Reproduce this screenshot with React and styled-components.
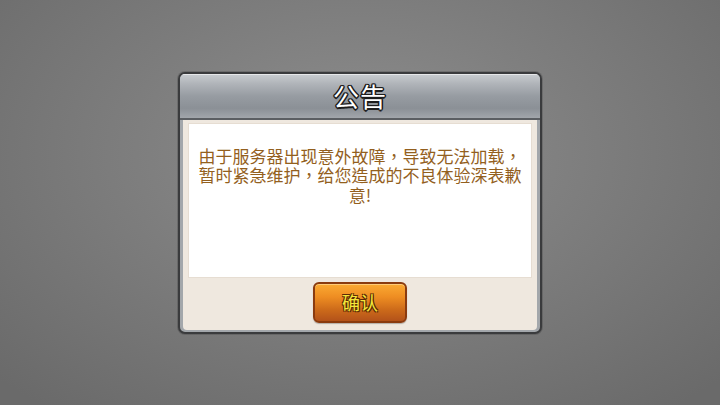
import React from 'react';
import styled, { createGlobalStyle } from 'styled-components';

const GlobalStyle = createGlobalStyle`
  html, body, #root {
    margin: 0;
    padding: 0;
    width: 100%;
    height: 100%;
  }
  body {
    font-family: "Noto Sans CJK SC", "Noto Sans", sans-serif;
    overflow: hidden;
  }
`;

const Screen = styled.div`
  width: 720px;
  height: 405px;
  display: flex;
  align-items: center;
  justify-content: center;
  background: radial-gradient(ellipse 70% 80% at 50% 38%, #8e8e8e 0%, #7c7c7c 50%, #6a6a6a 100%);
`;

const Dialog = styled.div`
  width: 364px;
  height: 262px;
  box-sizing: border-box;
  border: 2px solid #3a3b3d;
  border-radius: 7px;
  background: #a3a7ab;
  display: flex;
  flex-direction: column;
  overflow: hidden;
  box-shadow: 0 0 0 1px rgba(0, 0, 0, 0.15);
`;

const Header = styled.div`
  height: 44px;
  flex-shrink: 0;
  display: flex;
  align-items: center;
  justify-content: center;
  border-bottom: 2px solid #5b5e62;
  background: linear-gradient(
    to bottom,
    #c9cdd1 0%,
    #b0b4b9 22%,
    #979ca2 50%,
    #8b9096 78%,
    #a2a6ab 100%
  );
  box-shadow: inset 0 1px 0 rgba(255, 255, 255, 0.55);
`;

const Title = styled.h1`
  margin: 0;
  font-size: 26px;
  font-weight: 400;
  line-height: 1;
  color: #ffffff;
  letter-spacing: 1px;
  text-shadow:
    -1px -1px 0 #1c1c1c, 1px -1px 0 #1c1c1c,
    -1px 1px 0 #1c1c1c, 1px 1px 0 #1c1c1c,
    0 1.5px 0 #1c1c1c, 0 -1.5px 0 #1c1c1c,
    1.5px 0 0 #1c1c1c, -1.5px 0 0 #1c1c1c;
`;

const Body = styled.div`
  flex: 1;
  margin: 0 3px 2px;
  background: #efe8df;
  border-radius: 0 0 4px 4px;
  padding: 3px 5px 0;
  display: flex;
  flex-direction: column;
`;

const MessageBox = styled.div`
  height: 155px;
  background: #ffffff;
  border: 1px solid #e6ddd2;
  display: flex;
  justify-content: center;
  padding-top: 22px;
  box-sizing: border-box;
`;

// TC face gives the centred full-width comma seen in the screenshot
const Message = styled.p`
  margin: 0;
  width: 334px;
  font-family: "Noto Sans CJK TC", "Noto Sans CJK SC", sans-serif;
  font-size: 17px;
  line-height: 19.5px;
  color: #935f1e;
  text-align: center;
`;

const Footer = styled.div`
  flex: 1;
  display: flex;
  align-items: center;
  justify-content: center;
  padding-bottom: 3px;
`;

const ConfirmButton = styled.button`
  width: 94px;
  height: 41px;
  box-sizing: border-box;
  border: 2px solid #8a3b0f;
  border-radius: 6px;
  background: linear-gradient(to bottom, #fbaa33 0%, #ee8d22 35%, #cc6a1a 70%, #b3521a 100%);
  box-shadow: inset 0 1px 0 rgba(255, 220, 150, 0.7), 0 1px 1px rgba(0, 0, 0, 0.25);
  font-family: "Noto Sans CJK SC", sans-serif;
  font-size: 18px;
  color: #f4e63a;
  cursor: pointer;
  padding: 0;
  text-shadow:
    -1px -1px 0 #5a2a05, 1px -1px 0 #5a2a05,
    -1px 1px 0 #5a2a05, 1px 1px 0 #5a2a05;
`;

export default function App() {
  return (
    <>
      <GlobalStyle />
      <Screen>
        <Dialog>
          <Header>
            <Title>公告</Title>
          </Header>
          <Body>
            <MessageBox>
              <Message>
                由于服务器出现意外故障，导致无法加载，暂时紧急维护，给您造成的不良体验深表歉意!
              </Message>
            </MessageBox>
            <Footer>
              <ConfirmButton>确认</ConfirmButton>
            </Footer>
          </Body>
        </Dialog>
      </Screen>
    </>
  );
}
